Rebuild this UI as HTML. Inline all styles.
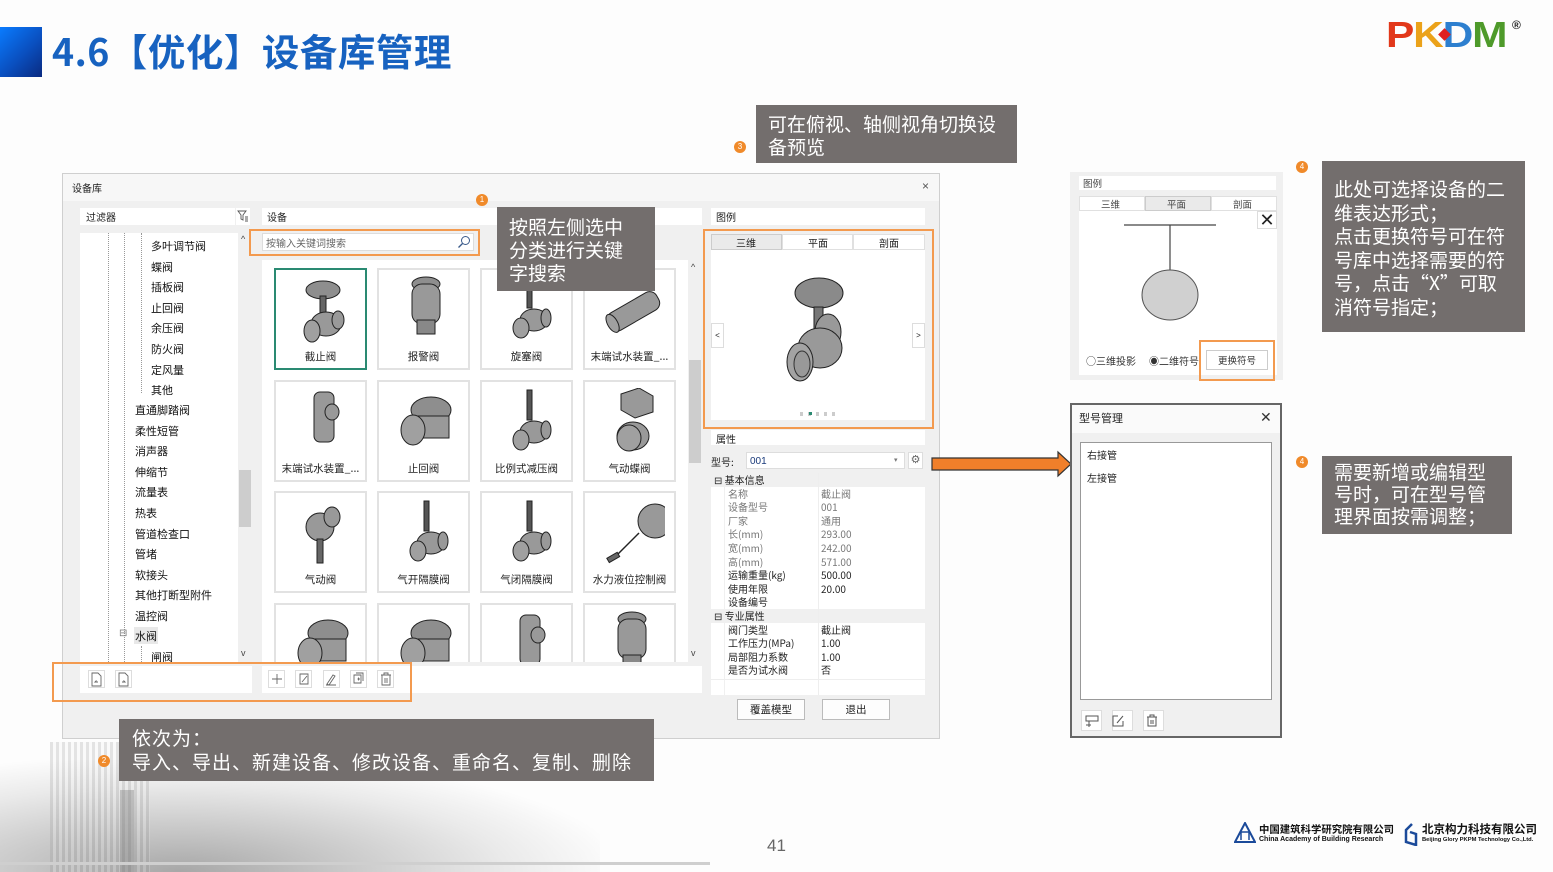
<!DOCTYPE html>
<html><head><meta charset="utf-8"><style>
*{margin:0;padding:0;box-sizing:border-box}
body{width:1553px;height:872px;background:#fdfdfd;position:relative;overflow:hidden;font-family:"Liberation Sans","Noto Sans CJK SC",sans-serif;color:#222}
.a{position:absolute}
.cjk{font-family:"Noto Sans CJK SC","Liberation Sans",sans-serif}
.t{font-size:11px;line-height:13px;white-space:nowrap}
.box{background:#fff;position:absolute}
.call{position:absolute;background:#736e6d;color:#fff;font-size:19px;line-height:23.5px;font-family:"Noto Sans CJK SC",sans-serif;padding:5px 12px}
.badge{position:absolute;width:12px;height:12px;border-radius:50%;background:#f08a2a;color:#fff;font-size:8px;line-height:12px;text-align:center}
.card{position:absolute;width:93px;height:102px;background:#fff;border:2px solid #e2e2e2}
.card .l{position:absolute;left:0;right:0;top:79px;text-align:center;font-size:10.5px;color:#222;font-family:"Noto Sans CJK SC",sans-serif}
.card svg{position:absolute;left:14px;top:6px}
.tree{font-size:11px;position:absolute;white-space:nowrap;color:#111;font-family:"Noto Sans CJK SC",sans-serif}
.row{position:absolute;left:0;width:214px;height:13.6px;font-size:10px;line-height:13.6px;color:#222;font-family:"Noto Sans CJK SC",sans-serif}
.row span{position:absolute}
.ib{position:absolute;width:17px;height:18px;border:1px solid #ddd;background:#fff}
</style></head><body>

<!-- header -->
<div class="a" style="left:0;top:27px;width:42px;height:50px;background:linear-gradient(135deg,#0a7cff 0%,#0a4fbf 55%,#0a2a80 100%)"></div>
<div class="a cjk" style="left:52px;top:24px;font-size:37.5px;font-weight:bold;color:#1762c0;line-height:52px;letter-spacing:0.5px">4.6【优化】设备库管理</div>
<!-- PKPM -->
<div class="a" style="left:1386px;top:18px;font-family:'Liberation Sans',sans-serif;font-weight:900;font-size:36px;line-height:34px;letter-spacing:-1px;transform:scaleX(1.18);transform-origin:left top">
<span style="color:#e2381a">P</span><span style="color:#eba21a">K</span><span style="color:#2d7fcf">D</span><span style="color:#4e9a2a">M</span></div>
<div class="a" style="left:1440px;top:30px;width:9px;height:9px;background:#e02020;transform:rotate(45deg)"></div>
<div class="a" style="left:1512px;top:18px;font-size:12px;font-weight:bold">®</div>

<!-- bottom-left buildings -->
<div class="a" style="left:0;top:760px;width:600px;height:112px;background:radial-gradient(ellipse at 30% 100%,rgba(110,110,110,.6),rgba(190,190,190,.3) 55%,rgba(253,253,253,0) 75%)"></div>
<div class="a" style="left:50px;top:742px;width:100px;height:130px;background:repeating-linear-gradient(90deg,rgba(150,150,150,.25) 0 3px,rgba(240,240,240,.2) 3px 6px)"></div>
<div class="a" style="left:120px;top:790px;width:14px;height:82px;background:rgba(130,130,130,.4)"></div>
<div class="a" style="left:0;top:862px;width:710px;height:3px;background:#cfcfcf"></div>

<!-- main dialog -->
<div class="a" style="left:62px;top:173px;width:878px;height:566px;background:#f0f0f0;border:1px solid #cfcfcf"></div>
<div class="a" style="left:63px;top:174px;width:876px;height:27px;background:#f7f7f7"></div>
<div class="a cjk t" style="left:72px;top:181px;font-size:10px">设备库</div>
<div class="a" style="left:922px;top:179px;font-size:12px;color:#555">×</div>

<div class="box" style="left:80px;top:208px;width:155px;height:17px"></div>
<div class="a cjk t" style="left:86px;top:210px;font-size:10px">过滤器</div>
<div class="box" style="left:236px;top:208px;width:14px;height:17px"></div>
<svg class="a" style="left:237px;top:210px" width="12" height="12"><path d="M1 1h8l-3 4v5l-2-1V5z M8 7h3M8 9h3M8 11h3" stroke="#555" fill="none" stroke-width="0.9"/></svg>

<div class="box" style="left:262px;top:208px;width:440px;height:17px"></div>
<div class="a cjk t" style="left:267px;top:210px;font-size:10px">设备</div>

<!-- tree -->
<div class="box" style="left:80px;top:233px;width:158px;height:429px"></div>
<div class="a" style="left:238px;top:233px;width:14px;height:429px;background:#f0f0f0"></div>
<div class="a" style="left:239px;top:470px;width:12px;height:57px;background:#cdcdcd"></div>
<div class="a" style="left:241px;top:234px;font-size:9px;color:#444">^</div>
<div class="a" style="left:241px;top:648px;font-size:9px;color:#444">v</div>
<div class="a" style="left:108px;top:233px;height:429px;border-left:1px dotted #999"></div>
<div class="a" style="left:124px;top:233px;height:429px;border-left:1px dotted #999"></div>
<div class="a" style="left:141px;top:233px;height:160px;border-left:1px dotted #999"></div>
<div class="a" style="left:141px;top:646px;height:16px;border-left:1px dotted #999"></div>
<div class="tree" style="left:151px;top:236px;line-height:20.6px">多叶调节阀<br>蝶阀<br>插板阀<br>止回阀<br>余压阀<br>防火阀<br>定风量<br>其他</div>
<div class="tree" style="left:135px;top:400px;line-height:20.6px">直通脚踏阀<br>柔性短管<br>消声器<br>伸缩节<br>流量表<br>热表<br>管道检查口<br>管堵<br>软接头<br>其他打断型附件<br>温控阀<br>水阀</div>
<div class="a" style="left:134px;top:627px;width:24px;height:17px;background:#e8e8e8"></div>
<div class="tree" style="left:135px;top:626px;line-height:20.6px">水阀</div>
<div class="a" style="left:119px;top:628px;font-size:10px;color:#777">⊟</div>
<div class="tree" style="left:151px;top:647px;line-height:20.6px">闸阀</div>

<!-- search -->
<div class="a" style="left:249px;top:229px;width:231px;height:27px;border:2px solid #f39a4f"></div>
<div class="box" style="left:262px;top:233px;width:212px;height:18px;border:1px solid #ddd"></div>
<div class="a cjk t" style="left:266px;top:236px;font-size:10px;color:#666">按输入关键词搜索</div>
<svg class="a" style="left:457px;top:235px" width="14" height="14"><circle cx="8.5" cy="5.5" r="4" stroke="#3a5a8a" fill="none"/><path d="M5.5 8.5L1.5 12.5" stroke="#3a5a8a" stroke-width="1.3"/></svg>

<!-- grid -->
<div class="box" style="left:262px;top:260px;width:426px;height:402px;overflow:hidden">
<svg width="0" height="0" style="position:absolute"><defs>
<g id="vA"><ellipse cx="33" cy="14" rx="17" ry="9" fill="#8e8e8e" stroke="#222"/><rect x="30" y="20" width="6" height="18" fill="#666" stroke="#222"/><ellipse cx="36" cy="48" rx="15" ry="12" fill="#999" stroke="#222"/><ellipse cx="22" cy="55" rx="8" ry="11" fill="#a0a0a0" stroke="#222"/><ellipse cx="48" cy="44" rx="6" ry="9" fill="#999" stroke="#222"/></g>
<g id="vB"><ellipse cx="33" cy="8" rx="14" ry="7" fill="#8e8e8e" stroke="#222"/><rect x="19" y="8" width="28" height="40" rx="10" fill="#999" stroke="#222"/><rect x="24" y="44" width="18" height="14" fill="#888" stroke="#222"/></g>
<g id="vC"><rect x="31" y="2" width="5" height="30" fill="#555" stroke="#222"/><ellipse cx="38" cy="44" rx="14" ry="11" fill="#999" stroke="#222"/><ellipse cx="25" cy="52" rx="8" ry="10" fill="#a0a0a0" stroke="#222"/><ellipse cx="50" cy="42" rx="5" ry="9" fill="#999" stroke="#222"/></g>
<g id="vD"><rect x="24" y="4" width="20" height="50" rx="6" fill="#999" stroke="#222"/><ellipse cx="42" cy="24" rx="7" ry="8" fill="#999" stroke="#222"/></g>
<g id="vE"><ellipse cx="38" cy="22" rx="20" ry="13" fill="#8e8e8e" stroke="#222"/><rect x="24" y="28" width="32" height="22" fill="#999" stroke="#222"/><ellipse cx="20" cy="42" rx="12" ry="15" fill="#a0a0a0" stroke="#222"/></g>
<g id="vF"><path d="M22 6l18-6 14 8v16l-18 6-14-8z" fill="#999" stroke="#222"/><ellipse cx="34" cy="48" rx="16" ry="14" fill="#999" stroke="#222"/><ellipse cx="30" cy="50" rx="12" ry="13" fill="#a0a0a0" stroke="#222"/></g>
<g id="vG"><ellipse cx="30" cy="28" rx="14" ry="14" fill="#999" stroke="#222"/><ellipse cx="42" cy="18" rx="8" ry="10" fill="#999" stroke="#222"/><rect x="27" y="40" width="6" height="24" fill="#666" stroke="#222"/></g>
<g id="vH"><circle cx="56" cy="22" r="17" fill="#999" stroke="#222"/><path d="M40 34L14 60" stroke="#222" stroke-width="1.5"/><rect x="8" y="56" width="12" height="5" fill="#666" stroke="#222" transform="rotate(-30 14 58)"/></g>
</defs></svg>
</div>
<div class="card" style="left:274px;top:268px;border-color:#2a8a72"><svg width="66" height="70"><use href="#vA"/></svg><div class="l">截止阀</div></div>
<div class="card" style="left:377px;top:268px"><svg width="66" height="70"><use href="#vB"/></svg><div class="l">报警阀</div></div>
<div class="card" style="left:480px;top:268px"><svg width="66" height="70"><use href="#vC"/></svg><div class="l">旋塞阀</div></div>
<div class="card" style="left:583px;top:268px"><svg width="66" height="70"><g transform="rotate(-30 33 35)"><rect x="6" y="26" width="56" height="20" rx="8" fill="#999" stroke="#222"/><ellipse cx="10" cy="36" rx="5" ry="10" fill="#a0a0a0" stroke="#222"/></g></svg><div class="l">末端试水装置_...</div></div>
<div class="card" style="left:274px;top:380px"><svg width="66" height="70"><use href="#vD"/></svg><div class="l">末端试水装置_...</div></div>
<div class="card" style="left:377px;top:380px"><svg width="66" height="70"><use href="#vE"/></svg><div class="l">止回阀</div></div>
<div class="card" style="left:480px;top:380px"><svg width="66" height="70"><use href="#vC"/></svg><div class="l">比例式减压阀</div></div>
<div class="card" style="left:583px;top:380px"><svg width="66" height="70"><use href="#vF"/></svg><div class="l">气动蝶阀</div></div>
<div class="card" style="left:274px;top:491px"><svg width="66" height="70"><use href="#vG"/></svg><div class="l">气动阀</div></div>
<div class="card" style="left:377px;top:491px"><svg width="66" height="70"><use href="#vC"/></svg><div class="l">气开隔膜阀</div></div>
<div class="card" style="left:480px;top:491px"><svg width="66" height="70"><use href="#vC"/></svg><div class="l">气闭隔膜阀</div></div>
<div class="card" style="left:583px;top:491px"><svg width="66" height="70"><use href="#vH"/></svg><div class="l">水力液位控制阀</div></div>
<div class="a" style="left:262px;top:603px;width:426px;height:59px;overflow:hidden">
<div class="card" style="left:12px;top:0"><svg width="66" height="70"><use href="#vE"/></svg></div>
<div class="card" style="left:115px;top:0"><svg width="66" height="70"><use href="#vE"/></svg></div>
<div class="card" style="left:218px;top:0"><svg width="66" height="70"><use href="#vD"/></svg></div>
<div class="card" style="left:321px;top:0"><svg width="66" height="70"><use href="#vB"/></svg></div>
</div>
<div class="a" style="left:688px;top:260px;width:14px;height:402px;background:#f0f0f0"></div>
<div class="a" style="left:689px;top:360px;width:12px;height:103px;background:#cdcdcd"></div>
<div class="a" style="left:691px;top:262px;font-size:9px;color:#444">^</div>
<div class="a" style="left:691px;top:648px;font-size:9px;color:#444">v</div>

<!-- bottom toolbar -->
<div class="box" style="left:80px;top:666px;width:172px;height:27px"></div>
<div class="box" style="left:262px;top:666px;width:440px;height:27px"></div>
<div class="ib" style="left:88px;top:670px"></div><div class="ib" style="left:115px;top:670px"></div>
<div class="ib" style="left:268px;top:670px"></div><div class="ib" style="left:295px;top:670px"></div><div class="ib" style="left:323px;top:670px"></div><div class="ib" style="left:350px;top:670px"></div><div class="ib" style="left:377px;top:670px"></div>
<svg class="a" style="left:88px;top:670px" width="320" height="18" fill="none" stroke="#666" stroke-width="0.9">
<path d="M4 3h6l3 3v10H4z M10 12h-3l1.5-1.5"/><path d="M31 3h6l3 3v10h-9z M34 12h3l-1.5-1.5"/>
<path d="M189 4v10M184 9h10"/><path d="M212 4h8v10h-8z M214 12l5-6"/><path d="M239 14l6-9 2 1-6 9z M238 15h10"/>
<path d="M266 5h7v8h-7z M268 3h7v8 M269.5 9h2.5 M270.5 7.5v3"/><path d="M293 5h10 M296 5V3h4v2 M294 5v10h8V5 M297 8v5M299 8v5"/></svg>
<div class="a" style="left:52px;top:662px;width:360px;height:40px;border:2px solid #f39a4f"></div>

<!-- right: 图例 -->
<div class="box" style="left:711px;top:208px;width:214px;height:17px"></div>
<div class="a cjk t" style="left:716px;top:210px;font-size:10px">图例</div>
<div class="box" style="left:711px;top:234px;width:214px;height:186px"></div>
<div class="a" style="left:711px;top:234px;width:71px;height:16px;background:#eaeaea;border:1px solid #ccc"></div>
<div class="a" style="left:782px;top:234px;width:71px;height:16px;border:1px solid #e0e0e0"></div>
<div class="a" style="left:853px;top:234px;width:72px;height:16px;border:1px solid #e0e0e0"></div>
<div class="a cjk t" style="left:736px;top:236px;font-size:10px">三维</div>
<div class="a cjk t" style="left:808px;top:236px;font-size:10px">平面</div>
<div class="a cjk t" style="left:879px;top:236px;font-size:10px">剖面</div>
<div class="a" style="left:711px;top:323px;width:13px;height:25px;border:1px solid #ddd;font-size:8px;text-align:center;line-height:24px">&lt;</div>
<div class="a" style="left:912px;top:323px;width:13px;height:25px;border:1px solid #ddd;font-size:8px;text-align:center;line-height:24px">&gt;</div>
<svg class="a" style="left:780px;top:274px" width="80" height="115">
<ellipse cx="39" cy="19" rx="24" ry="15" fill="#8a8a8a" stroke="#222"/><rect x="34" y="33" width="9" height="28" fill="#777" stroke="#222"/>
<ellipse cx="48" cy="58" rx="13" ry="18" fill="#999" stroke="#222"/><ellipse cx="40" cy="74" rx="22" ry="20" fill="#999" stroke="#222"/>
<ellipse cx="20" cy="88" rx="13" ry="19" fill="#a3a3a3" stroke="#222"/><ellipse cx="22" cy="90" rx="8" ry="13" fill="#999" stroke="#333"/></svg>
<div class="a" style="left:800px;top:412px;width:40px;height:4px;background:repeating-linear-gradient(90deg,#ccc 0 3px,transparent 3px 8px)"></div>
<div class="a" style="left:809px;top:412px;width:3px;height:3px;background:#2a8a72"></div>
<div class="a" style="left:703px;top:229px;width:231px;height:200px;border:2px solid #f39a4f"></div>

<div class="box" style="left:711px;top:430px;width:214px;height:15px"></div>
<div class="a cjk t" style="left:716px;top:432px;font-size:10px">属性</div>
<div class="a cjk t" style="left:711px;top:455px;font-size:10px">型号:</div>
<div class="box" style="left:746px;top:452px;width:159px;height:17px;border:1px solid #ddd"></div>
<div class="a t" style="left:750px;top:455px;font-size:10px;color:#1a3a7a">001</div>
<div class="a" style="left:894px;top:456px;font-size:7px;color:#777">▾</div>
<div class="box" style="left:908px;top:452px;width:15px;height:17px;border:1px solid #ddd;font-size:11px;text-align:center;color:#666;line-height:15px">⚙</div>

<div class="a" style="left:711px;top:473px;width:214px;height:222px;background:#fff">
<div class="row" style="top:0;background:#f0f0f0"><span style="left:3px">⊟ 基本信息</span></div>
<div class="row" style="top:13.6px;color:#777"><span style="left:17px">名称</span><span style="left:110px">截止阀</span></div>
<div class="row" style="top:27.2px;color:#777"><span style="left:17px">设备型号</span><span style="left:110px">001</span></div>
<div class="row" style="top:40.8px;color:#777"><span style="left:17px">厂家</span><span style="left:110px">通用</span></div>
<div class="row" style="top:54.4px;color:#777"><span style="left:17px">长(mm)</span><span style="left:110px">293.00</span></div>
<div class="row" style="top:68px;color:#777"><span style="left:17px">宽(mm)</span><span style="left:110px">242.00</span></div>
<div class="row" style="top:81.6px;color:#777"><span style="left:17px">高(mm)</span><span style="left:110px">571.00</span></div>
<div class="row" style="top:95.2px"><span style="left:17px">运输重量(kg)</span><span style="left:110px">500.00</span></div>
<div class="row" style="top:108.8px"><span style="left:17px">使用年限</span><span style="left:110px">20.00</span></div>
<div class="row" style="top:122.4px"><span style="left:17px">设备编号</span></div>
<div class="row" style="top:136px;background:#f0f0f0"><span style="left:3px">⊟ 专业属性</span></div>
<div class="row" style="top:149.6px"><span style="left:17px">阀门类型</span><span style="left:110px">截止阀</span></div>
<div class="row" style="top:163.2px"><span style="left:17px">工作压力(MPa)</span><span style="left:110px">1.00</span></div>
<div class="row" style="top:176.8px"><span style="left:17px">局部阻力系数</span><span style="left:110px">1.00</span></div>
<div class="row" style="top:190.4px"><span style="left:17px">是否为试水阀</span><span style="left:110px">否</span></div>
<div class="a" style="left:13px;top:13px;width:1px;height:209px;background:#f0f0f0"></div>
<div class="a" style="left:107px;top:0;width:1px;height:222px;background:#eee"></div>
<div class="a" style="left:0;top:206px;width:214px;height:1px;background:#eee"></div>
</div>
<div class="a cjk" style="left:737px;top:699px;width:68px;height:21px;border:1px solid #bbb;background:#fdfdfd;font-size:10.5px;text-align:center;line-height:19px">覆盖模型</div>
<div class="a cjk" style="left:822px;top:699px;width:68px;height:21px;border:1px solid #bbb;background:#fdfdfd;font-size:10.5px;text-align:center;line-height:19px">退出</div>

<!-- callouts -->
<div class="call" style="left:119px;top:719px;width:535px;height:62px;line-height:24px;padding-top:7px;padding-left:13px;letter-spacing:1px;white-space:nowrap">依次为：<br>导入、导出、新建设备、修改设备、重命名、复制、删除</div>
<div class="badge" style="left:98px;top:755px">2</div>
<div class="call" style="left:497px;top:207px;width:158px;height:84px;line-height:23px;padding-top:8px;padding-right:20px">按照左侧选中分类进行关键字搜索</div>
<div class="badge" style="left:476px;top:194px">1</div>
<div class="call" style="left:756px;top:105px;width:261px;height:58px;line-height:23px;padding-top:7px">可在俯视、轴侧视角切换设备预览</div>
<div class="badge" style="left:734px;top:141px">3</div>

<!-- arrow -->
<svg class="a" style="left:930px;top:450px" width="145" height="28"><path d="M2 8h126V2l13 12-13 12v-6H2z" fill="#f07f2a" stroke="#333" stroke-width="1.2"/></svg>

<!-- right top panel -->
<div class="a" style="left:1070px;top:172px;width:213px;height:208px;background:#f0f0f0"></div>
<div class="box" style="left:1079px;top:176px;width:197px;height:14px"></div>
<div class="a cjk t" style="left:1083px;top:177px;font-size:9.5px;color:#444">图例</div>
<div class="box" style="left:1079px;top:196px;width:198px;height:179px"></div>
<div class="a" style="left:1079px;top:196px;width:66px;height:15px;border:1px solid #e0e0e0"></div>
<div class="a" style="left:1145px;top:196px;width:66px;height:15px;background:#eaeaea;border:1px solid #ccc"></div>
<div class="a" style="left:1211px;top:196px;width:66px;height:15px;border:1px solid #e0e0e0"></div>
<div class="a cjk t" style="left:1101px;top:198px;font-size:9.5px;color:#444">三维</div>
<div class="a cjk t" style="left:1167px;top:198px;font-size:9.5px;color:#444">平面</div>
<div class="a cjk t" style="left:1233px;top:198px;font-size:9.5px;color:#444">剖面</div>
<div class="a" style="left:1257px;top:211px;width:20px;height:18px;background:#fff;border:1px solid #ddd;font-size:18px;line-height:16px;text-align:center">✕</div>
<svg class="a" style="left:1120px;top:220px" width="100" height="125"><path d="M4 5h92M50 5v45" stroke="#444" stroke-width="1.2"/><ellipse cx="50" cy="75" rx="28" ry="25" fill="#d0d0d0" stroke="#555"/></svg>
<div class="a cjk t" style="left:1086px;top:354px;font-size:10px;color:#333">○三维投影</div>
<div class="a cjk t" style="left:1149px;top:354px;font-size:10px;color:#333;width:52px;overflow:hidden">◉二维符号</div>
<div class="a cjk" style="left:1206px;top:350px;width:62px;height:20px;border:1px solid #ccc;background:#fff;font-size:9.5px;text-align:center;line-height:18px;color:#333">更换符号</div>
<div class="a" style="left:1199px;top:340px;width:76px;height:41px;border:2px solid #f39a4f"></div>

<!-- 型号管理 -->
<div class="a" style="left:1070px;top:403px;width:212px;height:335px;background:#f0f0f0;border:2px solid #666"></div>
<div class="a" style="left:1072px;top:405px;width:208px;height:28px;background:#fafafa"></div>
<div class="a cjk t" style="left:1079px;top:412px;font-size:11px">型号管理</div>
<div class="a" style="left:1260px;top:409px;font-size:14px;color:#333">✕</div>
<div class="box" style="left:1080px;top:442px;width:192px;height:258px;border:1px solid #999"></div>
<div class="a cjk t" style="left:1087px;top:448px;font-size:10px">右接管</div>
<div class="a cjk t" style="left:1087px;top:471px;font-size:10px">左接管</div>
<div class="ib" style="left:1081px;top:710px;width:21px;height:21px"></div>
<div class="ib" style="left:1112px;top:710px;width:21px;height:21px"></div>
<div class="ib" style="left:1143px;top:710px;width:21px;height:21px"></div>
<svg class="a" style="left:1081px;top:710px" width="85" height="21" fill="none" stroke="#555"><path d="M5 6h12v5H5z M8 11v6M5 15h5"/><path d="M37 6h-5v10h10v-5 M36 13l6-7"/><path d="M66 7h10 M69 7V5h4v2 M67 7v9h8V7 M70 10v4M72 10v4"/></svg>

<div class="call" style="left:1322px;top:161px;width:203px;height:171px;padding-top:16px;padding-left:12px;padding-right:14px">此处可选择设备的二维表达形式；<br>点击更换符号可在符号库中选择需要的符号，点击“X”可取消符号指定；</div>
<div class="badge" style="left:1296px;top:161px">4</div>
<div class="call" style="left:1322px;top:456px;width:190px;height:78px;line-height:22px;padding-top:5px;padding-left:12px">需要新增或编辑型号时，可在型号管理界面按需调整；</div>
<div class="badge" style="left:1296px;top:456px">4</div>

<div class="a" style="left:767px;top:836px;font-size:17px;color:#666">41</div>

<!-- footer logos -->
<svg class="a" style="left:1234px;top:822px" width="22" height="22"><path d="M11 1L21 20H1z" fill="none" stroke="#1b4a9a" stroke-width="2"/><path d="M7 18V10h8v8" stroke="#1b4a9a" fill="none" stroke-width="1.5"/></svg>
<div class="a cjk" style="left:1259px;top:823px;font-size:10.4px;font-weight:bold;line-height:12px;color:#111;white-space:nowrap">中国建筑科学研究院有限公司</div>
<div class="a" style="left:1259px;top:836px;font-size:7px;font-weight:bold;color:#111;white-space:nowrap">China Academy of Building Research</div>
<svg class="a" style="left:1403px;top:822px" width="16" height="24"><path d="M9 2L3 8v12l10 3V12l-6-2" fill="none" stroke="#1b4a9a" stroke-width="2.5"/></svg>
<div class="a cjk" style="left:1422px;top:823px;font-size:11.5px;font-weight:bold;line-height:13px;color:#111;white-space:nowrap">北京构力科技有限公司</div>
<div class="a" style="left:1422px;top:837px;font-size:5.8px;font-weight:bold;color:#111;white-space:nowrap">Beijing Glory PKPM Technology Co.,Ltd.</div>
</body></html>
